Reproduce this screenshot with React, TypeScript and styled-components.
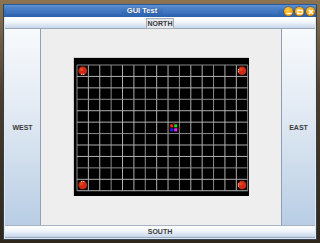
import styled, { createGlobalStyle } from "styled-components";

const GlobalStyle = createGlobalStyle`
  html, body {
    margin: 0;
    padding: 0;
    background: #2a2418;
  }
  * {
    box-sizing: border-box;
  }
`;

const COLS = 15;
const ROWS = 11;
const CELL_W = 11.38;
const CELL_H = 11.43;
const GRID_X = 3;
const GRID_Y = 7;

const cellCenter = (col: number, row: number) => ({
  x: GRID_X + (col + 0.5) * CELL_W,
  y: GRID_Y + (row + 0.5) * CELL_H,
});

const Board = () => {
  const vLines = Array.from({ length: COLS + 1 }, (_, i) => GRID_X + i * CELL_W);
  const hLines = Array.from({ length: ROWS + 1 }, (_, i) => GRID_Y + i * CELL_H);
  const right = GRID_X + COLS * CELL_W;
  const bottom = GRID_Y + ROWS * CELL_H;

  // corner bugs: position + direction of the white dots
  const bugs = [
    { ...cellCenter(0, 0), dx: 0, dy: 1 },
    { ...cellCenter(COLS - 1, 0), dx: -1, dy: 0 },
    { ...cellCenter(0, ROWS - 1), dx: 0, dy: -1 },
    { ...cellCenter(COLS - 1, ROWS - 1), dx: -1, dy: 0 },
  ];
  const bot = cellCenter(8, 5);

  return (
    <svg width="175" height="138" viewBox="0 0 175 138">
      <rect x="0" y="0" width="175" height="138" fill="#000" />
      {vLines.map((x, i) => (
        <line
          key={"v" + i}
          x1={x}
          y1={GRID_Y}
          x2={x}
          y2={bottom}
          stroke={i % 3 === 0 ? "#8a8a8a" : "#b0b0b0"}
          strokeWidth="1"
        />
      ))}
      {hLines.map((y, i) => (
        <line
          key={"h" + i}
          x1={GRID_X}
          y1={y}
          x2={right}
          y2={y}
          stroke={i % 3 === 0 ? "#8a8a8a" : "#b0b0b0"}
          strokeWidth="1"
        />
      ))}
      {bugs.map((b, i) => (
        <g key={"b" + i}>
          <circle cx={b.x} cy={b.y} r="4.3" fill="#d02a12" />
          <circle cx={b.x - 1.2} cy={b.y - 1.2} r="1.6" fill="#e04a26" />
          <rect
            x={b.x + b.dx * 3.6 - (b.dy !== 0 ? 1.5 : 0.5)}
            y={b.y + b.dy * 3.6 - (b.dx !== 0 ? 1.5 : 0.5)}
            width="1"
            height="1"
            fill="#fff"
          />
          <rect
            x={b.x + b.dx * 3.6 + (b.dy !== 0 ? 0.5 : -0.5)}
            y={b.y + b.dy * 3.6 + (b.dx !== 0 ? 0.5 : -0.5)}
            width="1"
            height="1"
            fill="#fff"
          />
        </g>
      ))}
      <g>
        <rect x={bot.x - 0.5} y={bot.y - 5.5} width="1.5" height="1.5" fill="#8a3a10" />
        <rect x={bot.x - 6} y={bot.y - 0.5} width="1.5" height="2" fill="#8a3a10" />
        <rect x={bot.x + 5} y={bot.y - 0.5} width="1.5" height="2" fill="#8a3a10" />
        <rect x={bot.x - 3.5} y={bot.y - 3.5} width="3" height="3" fill="#ff2020" />
        <rect x={bot.x + 0.5} y={bot.y - 3.5} width="3" height="3" fill="#20e020" />
        <rect x={bot.x - 3.5} y={bot.y + 0.5} width="3" height="3" fill="#2020ff" />
        <rect x={bot.x + 0.5} y={bot.y + 0.5} width="3" height="3" fill="#ff20ff" />
      </g>
    </svg>
  );
};

const App = () => {
  return (
    <>
      <GlobalStyle />
      <Desktop>
        <Window>
          <TitleBar>
            <Grip />
            <Title>GUI Test</Title>
            <Grip />
            <Controls>
              <WinButton>
                <svg width="6" height="6" viewBox="0 0 6 6">
                  <rect x="0.5" y="3.8" width="5" height="1.4" fill="#fff" />
                </svg>
              </WinButton>
              <WinButton>
                <svg width="6" height="6" viewBox="0 0 6 6">
                  <rect x="0.8" y="1.3" width="4.4" height="3.4" fill="none" stroke="#fff" strokeWidth="1.2" />
                </svg>
              </WinButton>
              <WinButton>
                <svg width="6" height="6" viewBox="0 0 6 6">
                  <path d="M1 1 L5 5 M5 1 L1 5" stroke="#fff" strokeWidth="1.4" />
                </svg>
              </WinButton>
            </Controls>
          </TitleBar>
          <Frame>
            <HBar>
              <Label $boxed>NORTH</Label>
            </HBar>
            <Middle>
              <Side $edge="right">
                <Label>WEST</Label>
              </Side>
              <Center>
                <BoardFrame>
                  <Board />
                </BoardFrame>
              </Center>
              <Side $edge="left">
                <Label>EAST</Label>
              </Side>
            </Middle>
            <HBar $tall>
              <Label>SOUTH</Label>
            </HBar>
          </Frame>
        </Window>
      </Desktop>
    </>
  );
};

export default App;

const Desktop = styled.div`
  width: 320px;
  height: 243px;
  padding: 4px 3px 3px 3px;
  background: linear-gradient(180deg, #8c7452 0%, #4a3c28 40%, #2e281c 100%);
  overflow: hidden;
`;

const Window = styled.div`
  width: 314px;
  height: 236px;
  display: flex;
  flex-direction: column;
  border: 1px solid #34404e;
  border-top-color: #2a5a9e;
  background: #e6edf6;
`;

const TitleBar = styled.div`
  height: 12px;
  flex: none;
  display: flex;
  align-items: center;
  gap: 6px;
  padding: 0 1px 0 2px;
  background: linear-gradient(180deg, #5f92d2 0%, #3c74c0 45%, #2b60ac 100%);
`;

const Grip = styled.div`
  flex: 1;
  height: 5px;
  background-image: radial-gradient(circle, rgba(120, 165, 222, 0.75) 0.5px, transparent 0.75px);
  background-size: 2px 2px;
`;

const Title = styled.div`
  font-family: "Liberation Sans", Arial, sans-serif;
  font-size: 7.5px;
  font-weight: 700;
  color: #ffffff;
  line-height: 1;
  text-shadow: 0 0 1px #1a3a70;
`;

const Controls = styled.div`
  display: flex;
  gap: 2px;
  margin-left: 0;
  margin-top: 1px;
`;

const WinButton = styled.div`
  width: 9px;
  height: 9px;
  border-radius: 50%;
  display: flex;
  align-items: center;
  justify-content: center;
  background: radial-gradient(circle at 40% 35%, #ffcc40 0%, #eca012 60%, #c07008 100%);
  box-shadow: 0 0 0 0.6px #6a4408;
`;

const Frame = styled.div`
  flex: 1;
  display: flex;
  flex-direction: column;
  padding: 0 1px 1px 1px;
  background: #dfe7f1;
`;

const HBar = styled.div<{ $tall?: boolean }>`
  height: ${(p) => (p.$tall ? "13px" : "12px")};
  flex: none;
  display: flex;
  align-items: center;
  justify-content: center;
  background: linear-gradient(180deg, #ffffff 0%, #f2f6fb 40%, #c6d6ea 100%);
  border-top: 1px solid ${(p) => (p.$tall ? "#a8b4c4" : "#ffffff")};
  border-bottom: 1px solid #9aa8bc;
`;

const Label = styled.span<{ $boxed?: boolean }>`
  font-family: "Liberation Sans", Arial, sans-serif;
  font-size: 7px;
  font-weight: 700;
  color: #3a3a3a;
  line-height: 1;
  padding: ${(p) => (p.$boxed ? "1px 1px" : "0")};
  border: ${(p) => (p.$boxed ? "1px solid #a8b0bc" : "none")};
  background: ${(p) => (p.$boxed ? "#e4e8ee" : "transparent")};
`;

const Middle = styled.div`
  flex: 1;
  display: flex;
`;

const Side = styled.div<{ $edge: "left" | "right" }>`
  width: ${(p) => (p.$edge === "right" ? "36px" : "34px")};
  display: flex;
  align-items: center;
  justify-content: center;
  background: linear-gradient(180deg, #f8fafc 0%, #e0e9f3 45%, #b8cde4 100%);
  border-${(p) => p.$edge}: 1px solid #8f9fb4;
`;

const Center = styled.div`
  flex: 1;
  display: flex;
  align-items: center;
  justify-content: center;
  background: #eeeeee;
`;

const BoardFrame = styled.div`
  display: flex;
  border-top: 1px solid #d0d0d0;
  border-left: 1px solid #d0d0d0;
  margin: -1px 0 0 -1px;
`;
